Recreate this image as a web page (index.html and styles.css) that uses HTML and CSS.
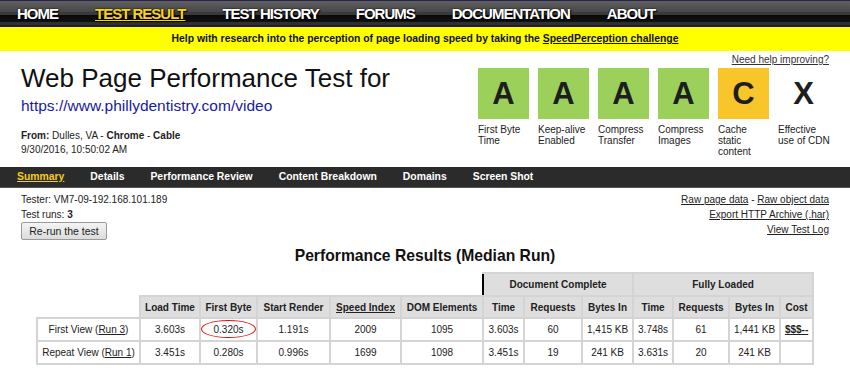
FILE: index.html
```html
<!DOCTYPE html>
<html lang="en">
<head>
    <meta charset="UTF-8">
    <meta name="viewport" content="width=device-width, initial-scale=1.0">
    <title>WebPagetest Test Result</title>
    <link rel="stylesheet" href="styles.css">
</head>
<body>
    <nav class="topnav">
        <a href="#">HOME</a>
        <a href="#" class="active">TEST RESULT</a>
        <a href="#">TEST HISTORY</a>
        <a href="#">FORUMS</a>
        <a href="#">DOCUMENTATION</a>
        <a href="#">ABOUT</a>
    </nav>

    <div class="banner">
        Help with research into the perception of page loading speed by taking the <a href="#">SpeedPerception challenge</a>
    </div>

    <div class="header">
        <div class="test-info">
            <h1>Web Page Performance Test for</h1>
            <a href="#" class="test-url">https://www.phillydentistry.com/video</a>
            <p class="location">
                <b>From:</b> Dulles, VA - <b>Chrome</b> - <b>Cable</b><br>
                9/30/2016, 10:50:02 AM
            </p>
        </div>

        <div class="grades">
            <a href="#" class="help-link">Need help improving?</a>
            <ul class="grade-list">
                <li><span class="grade grade-a">A</span><span class="grade-label">First Byte<br>Time</span></li>
                <li><span class="grade grade-a">A</span><span class="grade-label">Keep-alive<br>Enabled</span></li>
                <li><span class="grade grade-a">A</span><span class="grade-label">Compress<br>Transfer</span></li>
                <li><span class="grade grade-a">A</span><span class="grade-label">Compress<br>Images</span></li>
                <li><span class="grade grade-c">C</span><span class="grade-label">Cache<br>static<br>content</span></li>
                <li><span class="grade">X</span><span class="grade-label">Effective<br>use of CDN</span></li>
            </ul>
        </div>
    </div>

    <nav class="subnav">
        <a href="#" class="active">Summary</a>
        <a href="#">Details</a>
        <a href="#">Performance Review</a>
        <a href="#">Content Breakdown</a>
        <a href="#">Domains</a>
        <a href="#">Screen Shot</a>
    </nav>

    <div class="test-meta">
        <div class="meta-left">
            <div>Tester: VM7-09-192.168.101.189</div>
            <div>Test runs: <b>3</b></div>
            <button class="rerun">Re-run the test</button>
        </div>
        <div class="meta-right">
            <div><a href="#">Raw page data</a> - <a href="#">Raw object data</a></div>
            <div><a href="#">Export HTTP Archive (.har)</a></div>
            <div><a href="#">View Test Log</a></div>
        </div>
    </div>

    <h2 class="results-title">Performance Results (Median Run)</h2>

    <table class="results">
        <colgroup>
            <col style="width: 103px">
            <col style="width: 60px">
            <col style="width: 57px">
            <col style="width: 73px">
            <col style="width: 71px">
            <col style="width: 82px">
            <col style="width: 41px">
            <col style="width: 58px">
            <col style="width: 51px">
            <col style="width: 40px">
            <col style="width: 56px">
            <col style="width: 51px">
            <col style="width: 33px">
        </colgroup>
        <thead>
            <tr>
                <th colspan="6" class="blank"></th>
                <th colspan="3" class="group">Document Complete</th>
                <th colspan="4" class="group">Fully Loaded</th>
            </tr>
            <tr class="col-heads">
                <th class="blank"></th>
                <th>Load Time</th>
                <th>First Byte</th>
                <th>Start Render</th>
                <th><a href="#">Speed Index</a></th>
                <th>DOM Elements</th>
                <th class="group">Time</th>
                <th>Requests</th>
                <th>Bytes In</th>
                <th class="group">Time</th>
                <th>Requests</th>
                <th>Bytes In</th>
                <th>Cost</th>
            </tr>
        </thead>
        <tbody>
            <tr>
                <td>First View (<a href="#">Run 3</a>)</td>
                <td>3.603s</td>
                <td><span class="circled">0.320s</span></td>
                <td>1.191s</td>
                <td>2009</td>
                <td>1095</td>
                <td class="group">3.603s</td>
                <td>60</td>
                <td>1,415 KB</td>
                <td class="group">3.748s</td>
                <td>61</td>
                <td>1,441 KB</td>
                <td><a href="#" class="cost">$$$--</a></td>
            </tr>
            <tr>
                <td>Repeat View (<a href="#">Run 1</a>)</td>
                <td>3.451s</td>
                <td>0.280s</td>
                <td>0.996s</td>
                <td>1699</td>
                <td>1098</td>
                <td class="group">3.451s</td>
                <td>19</td>
                <td>241 KB</td>
                <td class="group">3.631s</td>
                <td>20</td>
                <td>241 KB</td>
                <td></td>
            </tr>
        </tbody>
    </table>
</body>
</html>
```

FILE: styles.css
```css
body {
    margin: 0;
    font-family: "Liberation Sans", Arial, sans-serif;
    font-size: 10px;
    color: #222;
    background-color: #fff;
}

a {
    color: #222;
}

/* top navigation */
.topnav {
    height: 27px;
    padding-left: 17px;
    display: flex;
    gap: 37px;
    background: linear-gradient(to bottom,
        #23234d 0, #23234d 1px,
        #606060 1px, #474747 12px,
        #3a3a3a 12px, #3a3a3a 15px,
        #080808 15px, #121212 22px,
        #303030 22px, #303030 25px,
        #1c1c36 25px, #1c1c36 27px);
}

.topnav a {
    color: #fff;
    font-size: 15px;
    font-weight: bold;
    line-height: 27px;
    letter-spacing: -1px;
    text-decoration: none;
    text-shadow: 1px 1px 1px #000, 0 0 2px #000;
}

.topnav a.active {
    color: #f8d41c;
    text-decoration: underline;
}

.banner {
    height: 24px;
    line-height: 24px;
    background-color: #ffff00;
    text-align: center;
    font-size: 10.4px;
    font-weight: bold;
    color: #111;
}

.banner a {
    color: #111;
}

/* test header */
.header {
    display: flex;
    justify-content: space-between;
    padding: 3px 21px 0 21px;
    height: 113px;
}

.test-info h1 {
    margin: 9px 0 4px 0;
    font-size: 26px;
    font-weight: normal;
    line-height: 30px;
    color: #111;
}

.test-url {
    display: block;
    font-size: 15.5px;
    line-height: 18px;
    color: #1a1a9c;
    text-decoration: none;
}

.location {
    margin: 14px 0 0 0;
    line-height: 14px;
}

.grades {
    display: flex;
    flex-direction: column;
    align-items: flex-end;
}

.help-link {
    line-height: 12px;
    color: #333;
}

.grade-list {
    list-style: none;
    margin: 2px 0 0 0;
    padding: 0;
    display: flex;
    gap: 9px;
}

.grade-list li {
    width: 51px;
}

.grade {
    display: block;
    height: 51px;
    line-height: 51px;
    text-align: center;
    font-size: 31px;
    font-weight: bold;
    color: #1e1e1e;
}

.grade-a {
    background-color: #9bd05b;
}

.grade-c {
    background-color: #f8c62a;
}

.grade-label {
    display: block;
    margin-top: 5px;
    line-height: 11px;
    white-space: nowrap;
}

/* summary navigation */
.subnav {
    height: 20px;
    padding-left: 17px;
    display: flex;
    gap: 26px;
    background-color: #2b2b2b;
    border-bottom: 1px solid #555;
}

.subnav a {
    color: #fff;
    font-size: 10.4px;
    font-weight: bold;
    line-height: 20px;
    text-decoration: none;
}

.subnav a.active {
    color: #f5cc1a;
    text-decoration: underline;
}

.test-meta {
    display: flex;
    justify-content: space-between;
    padding: 4px 21px 0 21px;
    line-height: 15px;
}

.meta-right {
    text-align: right;
}

.rerun {
    margin-top: 0;
    width: 86px;
    height: 18px;
    padding: 0;
    font-family: inherit;
    font-size: 10.5px;
    color: #222;
    background: linear-gradient(#f4f4f4, #dcdcdc);
    border: 1px solid #9a9a9a;
    border-radius: 2px;
}

.results-title {
    margin: 6px 0 6px 0;
    text-align: center;
    font-size: 15.7px;
    line-height: 20px;
    color: #111;
}

/* results table */
.results {
    margin-left: 36px;
    width: 776px;
    table-layout: fixed;
    border-collapse: collapse;
}

.results th,
.results td {
    height: 21px;
    padding: 0;
    text-align: center;
    border: 2px solid #d4d4d4;
    white-space: nowrap;
}

.results .col-heads th {
    height: 20px;
}

.results th {
    background-color: #dedede;
    font-weight: bold;
}

.results th.blank {
    background: none;
    border: none;
}

.results .group {
    border-left: 2px solid #000;
}

.cost {
    font-weight: bold;
}

.circled {
    position: relative;
}

.circled::after {
    content: "";
    position: absolute;
    left: -12px;
    right: -12px;
    top: -4px;
    bottom: -3px;
    border: 1.5px solid #e01010;
    border-radius: 50%;
}
```
